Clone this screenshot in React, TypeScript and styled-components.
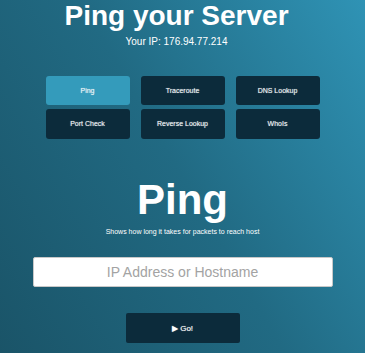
import styled, { createGlobalStyle } from "styled-components";

const GlobalStyle = createGlobalStyle`
  html, body {
    margin: 0;
    padding: 0;
  }
  body {
    font-family: "Liberation Sans", Arial, sans-serif;
  }
`;

const Page = styled.div`
  min-height: 353px;
  box-sizing: border-box;
  display: flex;
  flex-direction: column;
  align-items: center;
  background: linear-gradient(60deg, #1a5468 0%, #216a83 50%, #2f93b5 100%);
  color: #fff;
  overflow: hidden;
`;

// header block sits a little left of the page centre
const Header = styled.header`
  display: flex;
  flex-direction: column;
  align-items: center;
  padding-right: 12px;
`;

const Title = styled.h1`
  margin: 2px 0 0;
  font-size: 28px;
  line-height: 1;
  font-weight: 700;
`;

const IpLine = styled.div`
  margin-top: 6.5px;
  font-size: 10px;
  line-height: 1;
`;

const ToolGrid = styled.div`
  margin-top: 29px;
  display: grid;
  grid-template-columns: repeat(3, 84px);
  grid-auto-rows: 29.5px;
  column-gap: 11px;
  row-gap: 4px;
`;

const ToolButton = styled.button<{ $active?: boolean }>`
  border: none;
  border-radius: 3px;
  padding: 0;
  background: ${(p) => (p.$active ? "#349bbb" : "#0c2b3b")};
  color: #f2f6f8;
  font-family: "Liberation Sans", Arial, sans-serif;
  font-size: 7px;
  font-weight: 400;
  text-shadow: 0 0 1px rgba(255, 255, 255, 0.6);
  cursor: pointer;
`;

const ToolTitle = styled.h2`
  margin: 40.5px 0 0;
  font-size: 42px;
  line-height: 1;
  font-weight: 700;
`;

const ToolDesc = styled.p`
  margin: 7px 0 0;
  font-size: 7px;
  line-height: 1;
`;

const HostInput = styled.input`
  margin-top: 22px;
  width: 300px;
  height: 30px;
  box-sizing: border-box;
  border: 1px solid #c8c8c8;
  border-radius: 2px;
  background: #fff;
  font-family: "Liberation Sans", Arial, sans-serif;
  font-size: 14px;
  text-align: center;
  color: #333;
  outline: none;
  &::placeholder {
    color: #a3a3a3;
  }
`;

const GoButton = styled.button`
  margin-top: 26px;
  width: 114px;
  height: 30px;
  border: none;
  border-radius: 2px;
  background: #0c2b3b;
  color: #fff;
  font-family: "Liberation Sans", Arial, sans-serif;
  font-size: 8px;
  font-weight: 400;
  text-shadow: 0 0 1px rgba(255, 255, 255, 0.6);
  cursor: pointer;
`;

const tools = [
  "Ping",
  "Traceroute",
  "DNS Lookup",
  "Port Check",
  "Reverse Lookup",
  "WhoIs",
];

const App = () => {
  return (
    <Page>
      <GlobalStyle />
      <Header>
        <Title>Ping your Server</Title>
        <IpLine>Your IP: 176.94.77.214</IpLine>
      </Header>

      <ToolGrid>
        {tools.map((t) => (
          <ToolButton key={t} $active={t === "Ping"}>
            {t}
          </ToolButton>
        ))}
      </ToolGrid>

      <ToolTitle>Ping</ToolTitle>
      <ToolDesc>Shows how long it takes for packets to reach host</ToolDesc>

      <HostInput placeholder="IP Address or Hostname" />
      <GoButton>▶ Go!</GoButton>
    </Page>
  );
};

export default App;
